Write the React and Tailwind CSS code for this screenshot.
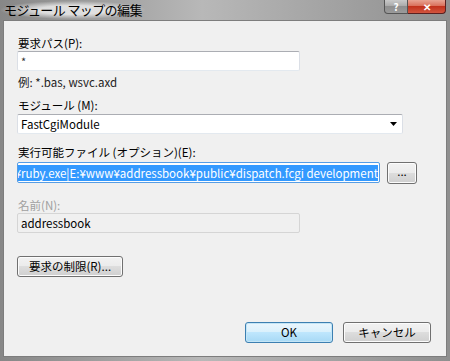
import React from "react";

const font = { fontFamily: '"Noto Sans CJK JP", "Noto Sans", sans-serif' };

function WinButton({ children, className = "", focused = false }) {
  return (
    <div
      className={
        "flex items-center justify-center rounded-[3px] border text-[11.5px] leading-none text-black " +
        (focused
          ? "border-[#3c7fb1] bg-[linear-gradient(#eaf6fd_0%,#d9f0fc_50%,#bee6fd_50%,#a7d9f5_100%)] shadow-[inset_0_0_0_1px_#c4e5f6] "
          : "border-[#707070] bg-[linear-gradient(#f2f2f2_0%,#ebebeb_50%,#dddddd_50%,#cfcfcf_100%)] shadow-[inset_0_0_0_1px_#fcfcfc] ") +
        className
      }
    >
      {children}
    </div>
  );
}

export default function App() {
  return (
    <div
      className="flex h-[361px] w-[450px] flex-col overflow-hidden bg-[linear-gradient(90deg,#878787_0%,#9c9c9c_20%,#b8b8b8_45%,#a9a9a9_65%,#8f8f8f_100%)]"
      style={font}
    >
      {/* Title bar */}
      <div className="flex h-[20px] shrink-0 items-start justify-between">
        <div className="ml-[1px] mt-[1px] rounded-[8px] bg-[radial-gradient(ellipse_at_center,rgba(235,235,235,0.85)_35%,rgba(220,220,220,0)_72%)] px-[3px] text-[13px] leading-[18px] tracking-[-0.6px] text-black">
          モジュール マップの編集
        </div>
        <div className="mr-[4px] flex h-[14px]">
          <div className="flex w-[24px] items-center justify-center rounded-bl-[4px] border border-t-0 border-[#555] bg-[linear-gradient(#c9c9c9_0%,#a8a8a8_50%,#8f8f8f_50%,#9b9b9b_100%)] text-[10px] font-bold leading-[10px] text-white">
            ?
          </div>
          <div className="flex w-[38px] items-center justify-center rounded-br-[4px] border border-l-0 border-t-0 border-[#5a2020] bg-[linear-gradient(#e8a493_0%,#d86a55_50%,#c2321c_50%,#d2553f_100%)] text-[10px] font-bold leading-[10px] text-white">
            ✕
          </div>
        </div>
      </div>

      {/* Client panel */}
      <div className="mb-[4px] ml-[3px] mr-[3px] flex flex-1 flex-col border border-[#7d7d7d] bg-[#f0f0f0] pb-[13px] pl-[13px] text-[11.5px] leading-[16px] text-black">
        <div className="mt-[14px] pl-[1px]">要求パス(P):</div>
        <div className="flex h-[20px] w-[283px] items-center rounded-[2px] border border-[#abadb3] border-b-[#e3e9ef] border-x-[#dbdfe6] bg-white pl-[3px] text-[11px] text-[#333]">
          *
        </div>
        <div className="mt-[3px] pl-[1px] text-[#222]">例: *.bas, wsvc.axd</div>
        <div className="mt-[7px] pl-[1px]">モジュール (M):</div>
        <div className="mt-[1px] flex h-[20px] w-[386px] items-center justify-between rounded-[2px] border border-[#abadb3] border-b-[#e3e9ef] border-x-[#dbdfe6] bg-white pl-[3px] pr-[5px]">
          <span>FastCgiModule</span>
          <svg width="7" height="4" viewBox="0 0 7 4">
            <path d="M0 0h7L3.5 4z" fill="#000" />
          </svg>
        </div>
        <div className="mt-[10px] pl-[1px]">実行可能ファイル (オプション)(E):</div>
        <div className="mt-[2px] flex items-start gap-[7px]">
          <div className="flex h-[21px] w-[363px] items-center justify-end overflow-hidden rounded-[2px] border border-[#569de5] bg-white px-[1px]">
            <span className="whitespace-nowrap bg-[#3399ff] leading-[16px] text-white">
              ¥ruby.exe|E:¥www¥addressbook¥public¥dispatch.fcgi development
            </span>
          </div>
          <WinButton className="h-[22px] w-[30px] pb-[3px]">...</WinButton>
        </div>
        <div className="mt-[13px] pl-[1px] text-[#a0a0a0]">名前(N):</div>
        <div className="flex h-[20px] w-[283px] items-center rounded-[2px] border border-[#d5d5d5] bg-[#f0f0f0] pl-[3px]">
          addressbook
        </div>
        <WinButton className="mt-[23px] h-[21px] w-[106px]">要求の制限(R)...</WinButton>
        <div className="flex-1" />
        <div className="flex justify-end gap-[10px] pr-[15px]">
          <WinButton focused className="h-[21px] w-[88px]">OK</WinButton>
          <WinButton className="h-[21px] w-[88px]">キャンセル</WinButton>
        </div>
      </div>
    </div>
  );
}
